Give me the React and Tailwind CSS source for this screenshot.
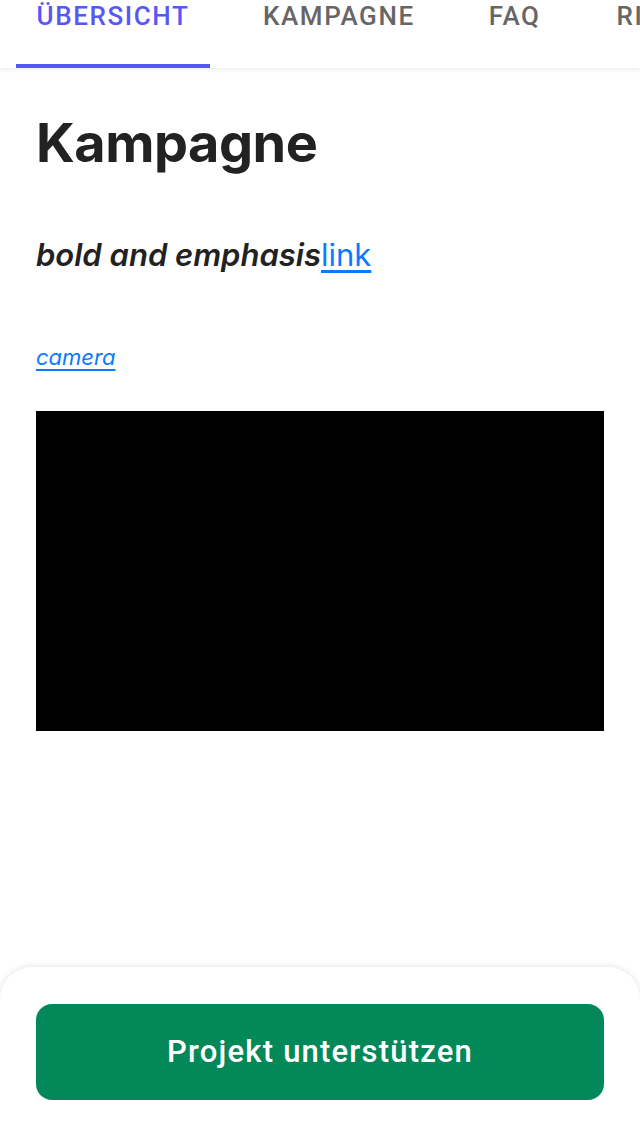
export default function App() {
  const tabs = [
    { label: 'KAMPAGNE', ml: 'ml-[53px]' },
    { label: 'FAQ', ml: 'ml-[74px]' },
    { label: 'RISIKEN', ml: 'ml-[76px]' }
  ]

  return (
    <div className="h-[1136px] w-[640px] flex flex-col bg-white overflow-hidden" style={{ fontFamily: 'Inter, "Noto Sans", sans-serif' }}>
      {/* Tab bar */}
      <header className="relative z-10 h-[68px] flex shrink-0 bg-white shadow-[0_2px_4px_rgba(0,0,0,0.07)] overflow-hidden" style={{ fontFamily: 'Roboto, "Liberation Sans", sans-serif' }}>
        <div className="ml-4 w-[194px] shrink-0 flex justify-center border-b-4 border-[#5757f7] text-[#5757f7] text-[26px] tracking-[1.6px] font-medium leading-none pt-[3px] whitespace-nowrap">
          ÜBERSICHT
        </div>
        {tabs.map(tab => (
          <div key={tab.label} className={`${tab.ml} shrink-0 text-[#666666] text-[26px] tracking-[1.6px] font-medium leading-none pt-[3px] whitespace-nowrap`}>
            {tab.label}
          </div>
        ))}
      </header>

      {/* Campaign content */}
      <main className="flex-1 flex flex-col px-9 text-[#222222]">
        <h1 className="mt-12 text-[54px] font-bold leading-none tracking-[-0.5px]">Kampagne</h1>
        <p className="mt-[69px] text-[31px] leading-none">
          <strong className="italic font-semibold">bold and emphasis</strong>
          <a href="#" className="text-[#0a7aff] underline underline-offset-4">link</a>
        </p>
        <p className="mt-[76px] text-[22px] leading-none">
          <a href="#" className="italic text-[#0a7aff] underline underline-offset-4">camera</a>
        </p>
        <div className="mt-[43px] h-[320px] w-[568px] bg-black" />
      </main>

      {/* Bottom action */}
      <footer className="shrink-0 h-[169px] rounded-t-[32px] bg-white shadow-[0_-1px_6px_rgba(0,0,0,0.1)] px-9 pt-[37px]">
        <button className="w-full h-[96px] rounded-2xl bg-[#03885a] text-white text-[31px] tracking-[1.2px] font-medium" style={{ fontFamily: 'Roboto, "Liberation Sans", sans-serif' }}>
          Projekt unterstützen
        </button>
      </footer>
    </div>
  )
}
